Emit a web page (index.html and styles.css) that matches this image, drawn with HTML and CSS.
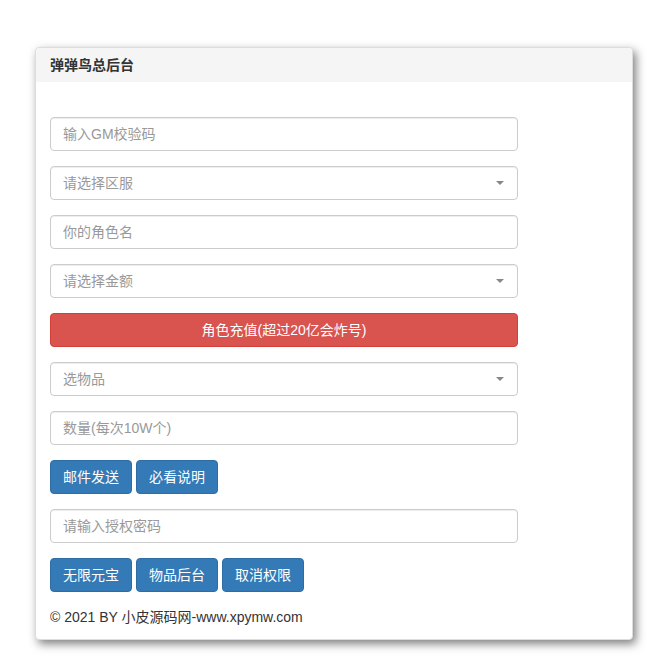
FILE: index.html
```html
<!DOCTYPE html>
<html lang="zh-CN">
<head>
<meta charset="utf-8">
<title>弹弹鸟总后台</title>
<link rel="stylesheet" href="styles.css">
</head>
<body>
<div class="page">
  <div class="panel">
    <div class="panel-heading">弹弹鸟总后台</div>
    <div class="panel-body">
      <div class="form">
        <input class="field" type="text" placeholder="输入GM校验码">
        <div class="select-wrap">
          <select class="field select"><option>请选择区服</option></select>
          <span class="caret"></span>
        </div>
        <input class="field" type="text" placeholder="你的角色名">
        <div class="select-wrap">
          <select class="field select"><option>请选择金额</option></select>
          <span class="caret"></span>
        </div>
        <button class="btn btn-danger btn-block">角色充值(超过20亿会炸号)</button>
        <div class="select-wrap">
          <select class="field select"><option>选物品</option></select>
          <span class="caret"></span>
        </div>
        <input class="field" type="text" placeholder="数量(每次10W个)">
        <div class="btn-row">
          <button class="btn btn-primary">邮件发送</button>
          <button class="btn btn-primary">必看说明</button>
        </div>
        <input class="field" type="password" placeholder="请输入授权密码">
        <div class="btn-row">
          <button class="btn btn-primary">无限元宝</button>
          <button class="btn btn-primary">物品后台</button>
          <button class="btn btn-primary">取消权限</button>
        </div>
      </div>
      <div class="footer">© 2021 BY 小皮源码网-www.xpymw.com</div>
    </div>
  </div>
</div>
</body>
</html>
```
FILE: styles.css
```css
* { box-sizing: border-box; }
html, body {
  margin: 0;
  padding: 0;
  background: #fff;
}
body {
  font-family: "Liberation Sans", "Noto Sans CJK SC", sans-serif;
  font-size: 14px;
  line-height: 20px;
  color: #333;
}
.page {
  padding: 47px 18px 20px 35px;
}
.panel {
  width: 598px;
  background: #fff;
  border: 1px solid #ddd;
  border-radius: 4px;
  box-shadow: 3px 4px 10px rgba(0, 0, 0, 0.5);
  overflow: hidden;
}
.panel-heading {
  background: #f5f5f5;
  padding: 10px 14px;
  height: 34px;
  font-size: 14px;
  line-height: 15px;
  font-weight: bold;
  color: #333;
}
.panel-body {
  padding: 35px 14px 12px 14px;
}
.form {
  width: 468px;
  display: flex;
  flex-direction: column;
  gap: 15px;
}
.field {
  display: block;
  width: 100%;
  height: 34px;
  padding: 6px 12px;
  border: 1px solid #ccc;
  border-radius: 4px;
  background: #fff;
  font-family: inherit;
  font-size: 14px;
  line-height: 20px;
  color: #555;
  box-shadow: inset 0 1px 1px rgba(0, 0, 0, 0.075);
  outline: none;
}
.field::placeholder { color: #999; }
.select {
  appearance: none;
  -webkit-appearance: none;
  color: #999;
  padding-right: 30px;
}
.select-wrap {
  position: relative;
}
.caret {
  position: absolute;
  right: 14px;
  top: 15px;
  width: 0;
  height: 0;
  border-left: 4px solid transparent;
  border-right: 4px solid transparent;
  border-top: 4px solid #888;
}
.btn {
  display: inline-block;
  height: 34px;
  padding: 6px 12px;
  border: 1px solid transparent;
  border-radius: 4px;
  font-family: inherit;
  font-size: 14px;
  line-height: 20px;
  color: #fff;
  cursor: pointer;
}
.btn-primary {
  background: #337ab7;
  border-color: #2e6da4;
}
.btn-danger {
  background: #d9534f;
  border-color: #d43f3a;
}
.btn-block {
  display: block;
  width: 100%;
  text-align: center;
}
.btn-row {
  display: flex;
  gap: 4px;
}
.footer {
  margin-top: 15px;
  color: #333;
  font-size: 14px;
  line-height: 20px;
}
```
